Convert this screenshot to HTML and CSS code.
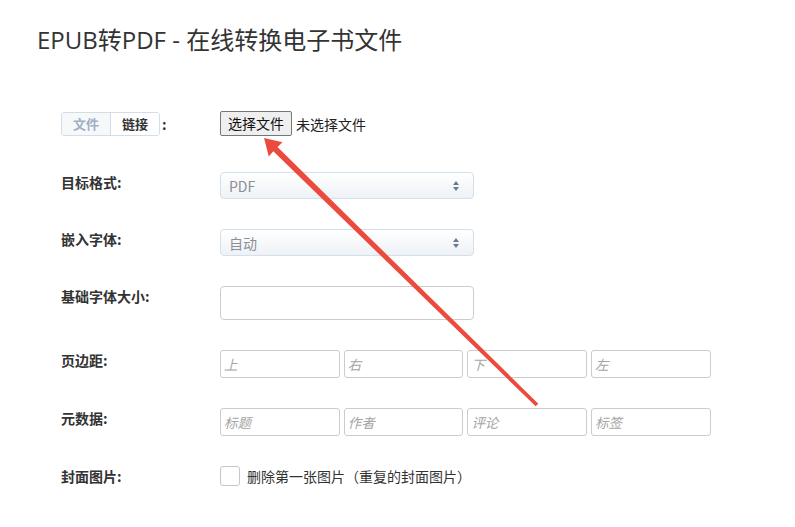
FILE: index.html
```html
<!DOCTYPE html>
<html lang="zh-CN">
<head>
<meta charset="utf-8">
<link rel="stylesheet" href="styles.css">
</head>
<body>
<div class="page">
  <h1 class="title">EPUB转PDF - 在线转换电子书文件</h1>
  <form class="form">
    <div class="row row-first">
      <div class="label label-toggle">
        <span class="toggle"><span class="tab active">文件</span><span class="tab">链接</span></span><span class="colon">:</span>
      </div>
      <div class="field file-field">
        <span class="file-btn">选择文件</span><span class="file-none">未选择文件</span>
      </div>
    </div>
    <div class="row">
      <div class="label">目标格式:</div>
      <div class="field">
        <div class="select"><span class="sel-text">PDF</span><span class="sel-arrows"><i class="up"></i><i class="down"></i></span></div>
      </div>
    </div>
    <div class="row">
      <div class="label">嵌入字体:</div>
      <div class="field">
        <div class="select"><span class="sel-text">自动</span><span class="sel-arrows"><i class="up"></i><i class="down"></i></span></div>
      </div>
    </div>
    <div class="row">
      <div class="label">基础字体大小:</div>
      <div class="field">
        <div class="text-input"></div>
      </div>
    </div>
    <div class="row">
      <div class="label">页边距:</div>
      <div class="field quad">
        <div class="small-input">上</div>
        <div class="small-input">右</div>
        <div class="small-input">下</div>
        <div class="small-input">左</div>
      </div>
    </div>
    <div class="row">
      <div class="label">元数据:</div>
      <div class="field quad">
        <div class="small-input">标题</div>
        <div class="small-input">作者</div>
        <div class="small-input">评论</div>
        <div class="small-input">标签</div>
      </div>
    </div>
    <div class="row">
      <div class="label">封面图片:</div>
      <div class="field check-field">
        <span class="checkbox"></span><span class="check-text">删除第一张图片（重复的封面图片）</span>
      </div>
    </div>
  </form>
  <svg class="arrow" width="795" height="527" viewBox="0 0 795 527">
    <polygon fill="#ec4a3c" points="264,138 282.5,142.3 277.5,147.1 538.3,403.7 535.7,406.3 273.3,151.3 268.8,156.5"/>
  </svg>
</div>
</body>
</html>
```
FILE: styles.css
```css
html, body {
  margin: 0;
  padding: 0;
  background: #ffffff;
}
body {
  font-family: "Open Sans", "Noto Sans CJK SC", sans-serif;
  color: #333;
}
.page {
  position: relative;
  width: 795px;
  height: 527px;
  overflow: hidden;
}
.title {
  margin: 0;
  padding: 24px 0 0 37px;
  font-size: 24px;
  line-height: 32px;
  font-weight: 400;
  color: #333;
}
.form {
  padding: 56px 0 0 61px;
  display: flex;
  flex-direction: column;
  gap: 30px;
}
.row {
  display: flex;
  align-items: flex-start;
}
.row-first {
  margin-bottom: 6px;
}
.label {
  width: 159px;
  flex: none;
  font-family: "Noto Sans CJK SC", sans-serif;
  font-size: 14px;
  font-weight: 700;
  line-height: 20px;
  color: #333;
}
.label-toggle {
  display: flex;
  align-items: center;
  height: 24px;
}
.toggle {
  display: inline-flex;
  border: 1px solid #d3dde7;
  border-radius: 3px;
  height: 24px;
  box-sizing: border-box;
  overflow: hidden;
}
.tab {
  width: 48px;
  text-align: center;
  line-height: 22px;
  font-size: 13px;
  color: #333;
  background: #fff;
}
.tab.active {
  color: #9eb0c3;
  background: #f6f8fa;
  border-right: 1px solid #d3dde7;
}
.colon {
  margin-left: 2px;
}
.field {
  font-family: "Noto Sans CJK SC", sans-serif;
  font-size: 14px;
}
.file-field {
  display: flex;
  align-items: center;
  height: 25px;
  margin-top: -1px;
}
.file-btn {
  box-sizing: border-box;
  height: 25px;
  width: 72px;
  border: 1px solid #767676;
  border-radius: 2px;
  background: #efefef;
  text-align: center;
  line-height: 23px;
  color: #111;
}
.file-none {
  margin-left: 4px;
  color: #222;
}
.select {
  box-sizing: border-box;
  width: 254px;
  height: 27px;
  border: 1px solid #d3dfea;
  border-radius: 4px;
  background: linear-gradient(#ffffff, #eef2f6);
  display: flex;
  align-items: center;
  justify-content: space-between;
  padding: 0 14px 0 8px;
}
.sel-text {
  color: #8a8f95;
  line-height: 20px;
}
.sel-arrows {
  display: flex;
  flex-direction: column;
  gap: 2px;
}
.sel-arrows i {
  display: block;
  width: 0;
  height: 0;
  border-left: 3px solid transparent;
  border-right: 3px solid transparent;
}
.sel-arrows .up {
  border-bottom: 4px solid #6a7a8a;
}
.sel-arrows .down {
  border-top: 4px solid #6a7a8a;
}
.text-input {
  box-sizing: border-box;
  width: 254px;
  height: 34px;
  border: 1px solid #cccccc;
  border-radius: 4px;
  background: #fff;
}
.quad {
  display: flex;
  gap: 4px;
}
.small-input {
  box-sizing: border-box;
  width: 119.7px;
  height: 28px;
  border: 1px solid #cccccc;
  border-radius: 3px;
  padding-left: 3px;
  line-height: 26px;
  font-size: 13.5px;
  font-style: italic;
  color: #a5a5a5;
}
.check-field {
  display: flex;
  align-items: center;
  height: 20px;
}
.checkbox {
  box-sizing: border-box;
  width: 20px;
  height: 20px;
  border: 1px solid #c6c6c6;
  border-radius: 3px;
  background: #fff;
}
.check-text {
  margin-left: 7px;
  color: #333;
}
.arrow {
  position: absolute;
  left: 0;
  top: 0;
  pointer-events: none;
}
```
